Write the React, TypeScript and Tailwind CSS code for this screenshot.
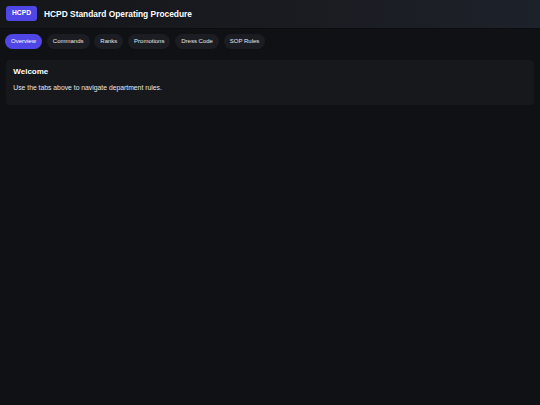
const tabs = ['Overview', 'Commands', 'Ranks', 'Promotions', 'Dress Code', 'SOP Rules'];

export default function App() {
  const active = 'Overview';

  return (
    <div className="min-h-screen bg-[#101115] text-white font-['Liberation_Sans',Arial,sans-serif]">
      {/* Header */}
      <header className="h-[28.5px] flex items-center gap-[7px] px-[6px] bg-gradient-to-r from-[#15161a] via-[#191b20] to-[#1d2129] border-b border-[#0c0d10]">
        <div className="h-[15px] w-[31px] flex items-center justify-center rounded-[3px] bg-[#4f46e5] text-[6.7px] font-bold leading-none">
          HCPD
        </div>
        <h1 className="text-[8.4px] font-bold leading-none">HCPD Standard Operating Procedure</h1>
      </header>

      {/* Tabs */}
      <nav className="flex gap-[4.8px] px-[5px] pt-[5px]">
        {tabs.map((tab) => (
          <button
            key={tab}
            className={
              tab === active
                ? 'h-[15.5px] px-[6px] rounded-full bg-[#4f46e5] text-[6px] leading-none text-white'
                : 'h-[15.5px] px-[6px] rounded-full bg-[#1c1d22] text-[6px] leading-none text-[#e5e7eb]'
            }
          >
            {tab}
          </button>
        ))}
      </nav>

      {/* Content */}
      <main className="px-[6px] pt-[11px]">
        <section className="rounded-[4px] bg-[#17181c] px-[7.3px] pt-[7.2px] pb-[13px]">
          <h2 className="text-[8px] leading-[1.15] font-bold mb-[7.4px]">Welcome</h2>
          <p className="text-[6.8px] leading-[1.15] text-[#e5e7eb]">Use the tabs above to navigate department rules.</p>
        </section>
      </main>
    </div>
  );
}
